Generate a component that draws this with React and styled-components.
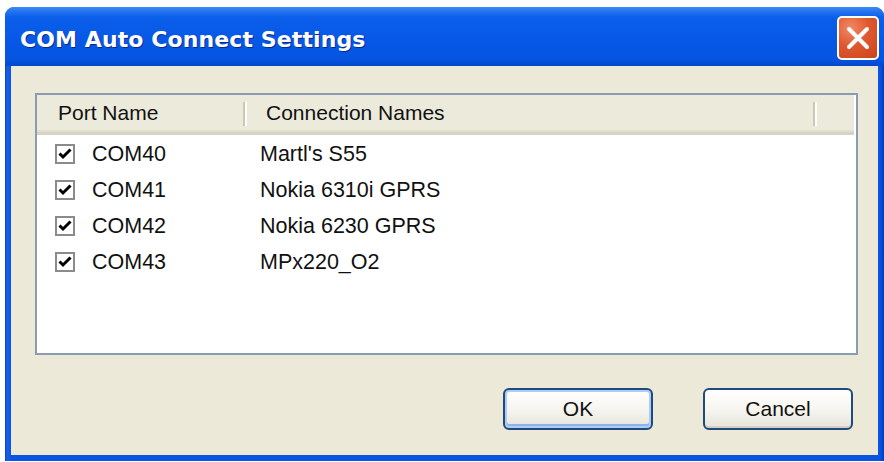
import React from "react";
import styled, { createGlobalStyle } from "styled-components";

const GlobalStyle = createGlobalStyle`
  html, body {
    margin: 0;
    padding: 0;
    background: #ffffff;
    overflow: hidden;
  }
  body {
    font-family: "Liberation Sans", Arial, sans-serif;
  }
`;

const ports = [
  { port: "COM40", name: "Martl's S55" },
  { port: "COM41", name: "Nokia 6310i GPRS" },
  { port: "COM42", name: "Nokia 6230 GPRS" },
  { port: "COM43", name: "MPx220_O2" },
];

const App = () => {
  return (
    <Page>
      <GlobalStyle />
      <Window>
        <TitleBar>
          <Title>COM Auto Connect Settings</Title>
          <CloseButton aria-label="Close">
            <svg width="26" height="26" viewBox="0 0 26 26">
              <path
                d="M4 4 L22 22 M22 4 L4 22"
                stroke="#ffffff"
                strokeWidth="4"
                strokeLinecap="round"
              />
            </svg>
          </CloseButton>
        </TitleBar>
        <Client>
          <ListBox>
            <Header>
              <HeaderCell width="208px">Port Name</HeaderCell>
              <HeaderCell width="570px">Connection Names</HeaderCell>
            </Header>
            <Rows>
              {ports.map((p) => (
                <Row key={p.port}>
                  <PortCell>
                    <CheckBox>
                      <svg width="14" height="12" viewBox="0 0 14 12">
                        <path
                          d="M1.5 5.5 L5 9 L12.5 1.5"
                          stroke="#000"
                          strokeWidth="3"
                          fill="none"
                        />
                      </svg>
                    </CheckBox>
                    {p.port}
                  </PortCell>
                  <NameCell>{p.name}</NameCell>
                </Row>
              ))}
            </Rows>
          </ListBox>
          <Buttons>
            <Button isDefault>OK</Button>
            <Button>Cancel</Button>
          </Buttons>
        </Client>
      </Window>
    </Page>
  );
};

export default App;

const Page = styled.div`
  width: 884px;
  height: 462px;
  padding: 7px 0 0 5px;
  box-sizing: border-box;
  overflow: hidden;
`;

const Window = styled.div`
  width: 879px;
  height: 454px;
  display: flex;
  flex-direction: column;
  background: linear-gradient(
    to right,
    #0842c8 0px,
    #1a5cec 2px,
    #0a55e0 6px,
    #0a55e0 calc(100% - 4px),
    #0638b8 100%
  );
  border-radius: 9px 9px 0 0;
  overflow: hidden;
`;

const TitleBar = styled.div`
  height: 59px;
  flex-shrink: 0;
  display: flex;
  align-items: center;
  justify-content: space-between;
  padding: 0 5px 0 15px;
  background: linear-gradient(
    to bottom,
    #3a8cf6 0px,
    #2b7af4 3px,
    #0b5fea 10px,
    #0657e6 35px,
    #0655e2 52px,
    #0348cc 59px
  );
`;

const Title = styled.div`
  color: #ffffff;
  font-family: "DejaVu Sans", "Liberation Sans", sans-serif;
  font-weight: bold;
  font-size: 22px;
  letter-spacing: 0.1px;
  text-shadow: 1px 1px 0 #0a2a8a;
  padding-top: 6px;
`;

const CloseButton = styled.div`
  width: 38px;
  height: 40px;
  margin-top: 2px;
  display: flex;
  align-items: center;
  justify-content: center;
  border: 2px solid #ffffff;
  border-radius: 5px;
  background: radial-gradient(
    circle at 30% 25%,
    #f08a66 0%,
    #e1582f 45%,
    #c9431c 100%
  );
`;

const Client = styled.div`
  flex: 1;
  margin: 0 6px 6px 6px;
  background: #ece9d8;
  padding: 27px 20px 0 24px;
  display: flex;
  flex-direction: column;
`;

const ListBox = styled.div`
  height: 262px;
  box-sizing: border-box;
  border: 2px solid #8a9cb2;
  background: #ffffff;
  display: flex;
  flex-direction: column;
`;

const Header = styled.div`
  height: 40px;
  flex-shrink: 0;
  display: flex;
  margin-right: 2px;
  box-sizing: border-box;
  background: #ebeadb;
  border-bottom: 3px solid #d6d3c4;
  box-shadow: inset 0 -2px 0 #e2dfcf;
`;

const HeaderCell = styled.div`
  width: ${(p) => p.width};
  flex-shrink: 0;
  display: flex;
  align-items: center;
  padding-left: 21px;
  padding-bottom: 2px;
  box-sizing: border-box;
  font-size: 21px;
  color: #111;
  position: relative;

  &::after {
    content: "";
    position: absolute;
    right: 0;
    top: 7px;
    bottom: 6px;
    width: 2px;
    background: #cbc8b5;
    box-shadow: 2px 0 0 #ffffff;
  }
`;

const Rows = styled.div`
  padding-top: 1px;
  display: flex;
  flex-direction: column;
`;

const Row = styled.div`
  height: 36px;
  display: flex;
  align-items: center;
  font-size: 21.5px;
  color: #111;
`;

const PortCell = styled.div`
  width: 223px;
  flex-shrink: 0;
  display: flex;
  align-items: center;
  padding-left: 18px;
  box-sizing: border-box;
`;

const NameCell = styled.div``;

const CheckBox = styled.div`
  width: 20px;
  height: 20px;
  box-sizing: border-box;
  border: 2px solid #8b8b8b;
  background: #ffffff;
  display: flex;
  align-items: center;
  justify-content: center;
  margin-right: 17px;
`;

const Buttons = styled.div`
  display: flex;
  justify-content: flex-end;
  gap: 50px;
  margin-top: 33px;
  padding-right: 5px;
`;

const Button = styled.div`
  width: 150px;
  height: 42px;
  box-sizing: border-box;
  border: 2px solid #1f4a7e;
  border-radius: 6px;
  display: flex;
  align-items: center;
  justify-content: center;
  font-size: 21px;
  color: #111;
  background: linear-gradient(to bottom, #ffffff 0%, #f6f5f0 50%, #e6e4dc 100%);
  box-shadow: ${(p) =>
    p.isDefault
      ? "inset 0 0 0 2px #aecdf4, inset 0 -2px 0 2px #8fb2ea"
      : "inset 0 -2px 0 #d6d0c0"};
`;
